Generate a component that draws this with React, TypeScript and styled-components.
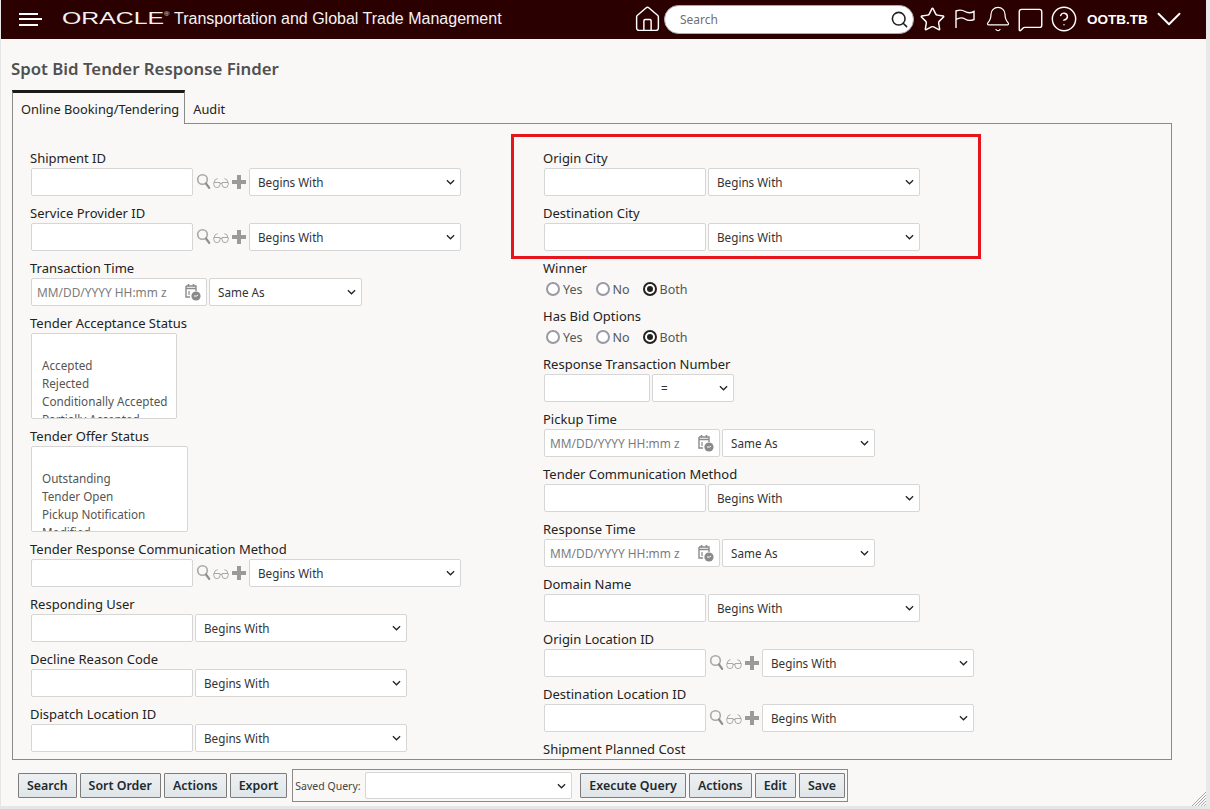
import React from "react";
import styled, { createGlobalStyle } from "styled-components";
import { Bell, ChevronDown, CircleHelp, House, MessageSquare, Search, Star } from "lucide-react";

const GlobalStyle = createGlobalStyle`
  html, body {
    margin: 0;
    padding: 0;
    background: #f9f8f6;
    font-family: "Noto Sans", "Open Sans", sans-serif;
    font-size: 12px;
    color: #333;
  }
  * { box-sizing: border-box; }
`;

const chevron =
  "data:image/svg+xml;utf8,<svg xmlns='http://www.w3.org/2000/svg' width='9' height='6' viewBox='0 0 10 6'><path d='M1 1 L5 5 L9 1' fill='none' stroke='%23222' stroke-width='1.4'/></svg>";

const Page = styled.div`
  height: 100vh;
  display: flex;
  flex-direction: column;
  overflow: hidden;
  position: relative;
  border-bottom: 3px solid #e6e6e6;
  border-left: 1px solid #e6e6e6;
  border-right: 4px solid #e9e9e9;
`;

// header
const Header = styled.header`
  height: 39px;
  flex: none;
  background: #2b0000;
  color: #fff;
  display: flex;
  align-items: center;
  padding: 0 17px 1px 18px;
`;

const Burger = styled.div`
  width: 23px;
  height: 13px;
  display: flex;
  flex-direction: column;
  justify-content: space-between;
  margin-right: 20px;
  span {
    display: block;
    height: 2px;
    background: #fff;
  }
  span:nth-child(2) { width: 23px; }
  span:nth-child(1), span:nth-child(3) { width: 19px; }
`;

const LogoSlot = styled.div`
  width: 112px;
  flex: none;
  display: flex;
`;

const Logo = styled.span`
  display: inline-block;
  font-family: "Liberation Sans", Arial, sans-serif;
  font-size: 17px;
  transform: scaleX(1.46);
  transform-origin: left center;
  color: #f2f2f2;
  sup {
    font-size: 5px;
    vertical-align: 8px;
  }
`;

const AppName = styled.div`
  font-family: "Liberation Sans", Arial, sans-serif;
  font-size: 16px;
  flex: 1;
  color: #f4f4f4;
`;

const HeaderTools = styled.div`
  display: flex;
  align-items: center;
`;

const HeaderIcon = styled.span<{ $w: number }>`
  width: ${(p) => p.$w}px;
  display: flex;
  justify-content: center;
  align-items: center;
  svg { flex: none; }
`;

const SearchBox = styled.div`
  width: 250px;
  height: 29px;
  margin: 0 2px 0 4px;
  background: #fff;
  border: 1px solid #aaa;
  border-radius: 15px;
  display: flex;
  align-items: center;
  justify-content: space-between;
  padding: 0 4px 0 15px;
  color: #6f6f6f;
  font-size: 12px;
`;

const UserName = styled.span`
  font-family: "Liberation Sans", Arial, sans-serif;
  font-weight: 700;
  font-size: 13.5px;
  width: 62px;
  margin-left: 6px;
`;

// title + tabs
const Title = styled.h1`
  margin: 20px 0 0 10px;
  height: 20px;
  line-height: 20px;
  font-size: 16.8px;
  font-weight: 600;
  color: #505050;
`;

const Tabs = styled.div`
  display: flex;
  margin: 11px 34px 0 11px;
  height: 34px;
  flex: none;
  position: relative;
  z-index: 1;
`;

const Tab = styled.div<{ $active?: boolean }>`
  font-size: 12.8px;
  color: #222;
  background: #f9f8f6;
  ${(p) =>
    p.$active
      ? `
    height: 34px;
    line-height: 33px;
    padding: 0 5px 0 8px;
    border-top: 3px solid #1a1a1a;
    border-left: 1px solid #8a8a8a;
    border-right: 1px solid #8a8a8a;
  `
      : `
    height: 33px;
    line-height: 39px;
    padding: 0 8px;
    background: transparent;
  `}
`;

const Panel = styled.div`
  flex: 1;
  min-height: 0;
  margin: -1px 34px 0 11px;
  border: 1px solid #8a8a8a;
  overflow: hidden;
  position: relative;
  display: grid;
  grid-template-columns: 513px 1fr;
  padding: 26px 0 0 17px;
`;

const Column = styled.div`
  display: flex;
  flex-direction: column;
`;

const Field = styled.div`
  flex: none;
  margin-bottom: 9px;
`;

const Label = styled.div`
  height: 18px;
  line-height: 16px;
  font-size: 13px;
  color: #222;
  white-space: nowrap;
`;

const Row = styled.div`
  display: flex;
  align-items: center;
  gap: 2px;
  height: 28px;
  padding-left: 1px;
`;

const TextInput = styled.input<{ $w?: number }>`
  width: ${(p) => p.$w ?? 162}px;
  height: 28px;
  background: #fff;
  border: 1px solid #d6d6d6;
  border-radius: 2px;
  padding: 0 5px;
  font: inherit;
`;

const DateBox = styled.div`
  width: 176px;
  height: 28px;
  background: #fff;
  border: 1px solid #d6d6d6;
  border-radius: 2px;
  padding: 0 4px 0 5px;
  display: flex;
  align-items: center;
  justify-content: space-between;
  color: #7b7b7b;
  font-size: 11.9px;
  white-space: nowrap;
`;

const DropDown = styled.select<{ $w?: number }>`
  width: ${(p) => p.$w ?? 212}px;
  height: 28px;
  appearance: none;
  background: #fff url("${chevron}") no-repeat right 5px center;
  border: 1px solid #d6d6d6;
  border-radius: 2px;
  padding: 0 8px;
  font-family: inherit;
  font-size: 11.7px;
  color: #333;
`;

const IconGroup = styled.div`
  width: 52px;
  display: flex;
  align-items: center;
  padding-left: 1px;
  gap: 1px;
`;

const PlusSlot = styled.span`
  display: flex;
  margin-left: 2px;
`;

const ListBox = styled.ul<{ $w: number }>`
  list-style: none;
  margin: 0 0 0 1px;
  width: ${(p) => p.$w}px;
  height: 86px;
  overflow: hidden;
  background: #fff;
  border: 1px solid #d6d6d6;
  border-radius: 2px;
  padding: 4px 0 0 10px;
  li {
    height: 18px;
    line-height: 18px;
    font-size: 11.7px;
    color: #555;
    white-space: nowrap;
  }
`;

const RadioRow = styled.div`
  height: 21px;
  padding: 1px 0 0 3px;
  display: flex;
  align-items: center;
  font-size: 12.5px;
  color: #555;
`;

const RadioItem = styled.label`
  display: flex;
  align-items: center;
  gap: 3px;
  margin-right: 13px;
`;

const RadioMark = styled.span<{ $on?: boolean }>`
  width: 14px;
  height: 14px;
  border-radius: 50%;
  background: #fff;
  border: ${(p) => (p.$on ? "2px solid #222" : "2px solid #9a9aa6")};
  display: flex;
  align-items: center;
  justify-content: center;
  &::after {
    content: "";
    display: ${(p) => (p.$on ? "block" : "none")};
    width: 6px;
    height: 6px;
    border-radius: 50%;
    background: #222;
  }
`;

// footer bar
const Footer = styled.div`
  flex: none;
  height: 46px;
  padding: 13px 0 0 17px;
  display: flex;
  align-items: flex-start;
  gap: 3px;
`;

const Button = styled.button`
  height: 25px;
  padding: 0 8px 1px;
  background: linear-gradient(#eef1f3, #dfe5e8);
  border: 1px solid #7c7c7c;
  border-radius: 1px;
  font-family: inherit;
  font-size: 12.4px;
  font-weight: 600;
  color: #22292e;
`;

const QueryGroup = styled.div`
  height: 33px;
  margin: -4px 0 0 2px;
  border: 1px solid #8a8a8a;
  display: flex;
  align-items: center;
  padding: 0 2px;
  gap: 3px;
`;

const QueryLabel = styled.span`
  font-size: 10.5px;
  color: #444;
  width: 67px;
  white-space: nowrap;
`;

const QuerySelect = styled(DropDown)`
  width: 207px;
  height: 27px;
  margin-right: 5px;
`;

// red highlight drawn over the form
const Highlight = styled.div`
  position: absolute;
  left: 498px;
  top: 10px;
  width: 470px;
  height: 125px;
  border: 3px solid #e8141c;
  pointer-events: none;
`;

const ResizeGrip = styled.svg`
  position: absolute;
  right: 0;
  bottom: 0;
`;

const Lens = () => (
  <svg width="16" height="20" viewBox="0 0 16 20" fill="none">
    <circle cx="6.5" cy="7.5" r="4.8" stroke="#a8a8a8" strokeWidth="1.6" />
    <path d="M10 11.5 L13.2 15.8" stroke="#8f8f8f" strokeWidth="2.2" strokeLinecap="round" />
  </svg>
);

const Glasses = () => (
  <svg width="16" height="20" viewBox="0 0 16 20" fill="none" stroke="#a8a8a8" strokeWidth="1">
    <path d="M0.8 10.5 H7 V12.5 A3 3 0 0 1 0.8 12.5 Z" />
    <path d="M9 10.5 H15.2 V12.5 A3 3 0 0 1 9 12.5 Z" />
    <path d="M7 11.5 H9 M1.2 10.5 Q1.4 7 4.6 6.6 M14.8 10.5 Q14.6 7 11.4 6.6" />
  </svg>
);

const PlusMark = () => (
  <svg width="14" height="14" viewBox="0 0 14 14">
    <path d="M5 0 H9 V5 H14 V9 H9 V14 H5 V9 H0 V5 H5 Z" fill="#9a9a9a" />
  </svg>
);

const CalendarClock = () => (
  <svg width="18" height="20" viewBox="0 0 18 20" fill="none">
    <path d="M2 4 H12 V9 M2 4 V15 H6" stroke="#8a8a8a" strokeWidth="1.4" />
    <path d="M2 6.5 H12 M4.5 2 V4.5 M9.5 2 V4.5" stroke="#8a8a8a" strokeWidth="1.6" />
    <path d="M5 9 V13" stroke="#8a8a8a" strokeWidth="1.2" />
    <circle cx="12" cy="14" r="4.6" fill="#8a8a8a" />
    <path d="M10 14 H12.5 L14 13" stroke="#fff" strokeWidth="1" />
  </svg>
);

const FlagIcon = () => (
  <svg width="22" height="22" viewBox="0 0 22 22" fill="none" stroke="#fff" strokeWidth="1.4">
    <path d="M2 20 V3 Q7 1 11 3.5 T20 3.5 V11.5 Q15 13.5 11 11 T2 11.5" />
  </svg>
);

const ops = ["Begins With", "Same As", "="];

function Pick({ value, w }: { value: string; w?: number }) {
  return (
    <DropDown $w={w} defaultValue={value}>
      {ops.map((o) => (
        <option key={o}>{o}</option>
      ))}
    </DropDown>
  );
}

function LookupField({ label }: { label: string }) {
  return (
    <Field>
      <Label>{label}</Label>
      <Row>
        <TextInput />
        <IconGroup>
          <Lens />
          <Glasses />
          <PlusSlot>
            <PlusMark />
          </PlusSlot>
        </IconGroup>
        <Pick value="Begins With" />
      </Row>
    </Field>
  );
}

function TextField({ label }: { label: string }) {
  return (
    <Field>
      <Label>{label}</Label>
      <Row>
        <TextInput />
        <Pick value="Begins With" />
      </Row>
    </Field>
  );
}

function DateField({ label }: { label: string }) {
  return (
    <Field>
      <Label>{label}</Label>
      <Row>
        <DateBox>
          MM/DD/YYYY HH:mm z
          <CalendarClock />
        </DateBox>
        <Pick value="Same As" w={153} />
      </Row>
    </Field>
  );
}

function ListField({ label, w, items }: { label: string; w: number; items: string[] }) {
  return (
    <Field>
      <Label>{label}</Label>
      <ListBox $w={w}>
        <li />
        {items.map((i) => (
          <li key={i}>{i}</li>
        ))}
      </ListBox>
    </Field>
  );
}

function RadioField({ label }: { label: string }) {
  return (
    <Field>
      <Label>{label}</Label>
      <RadioRow>
        <RadioItem>
          <RadioMark />
          Yes
        </RadioItem>
        <RadioItem>
          <RadioMark />
          No
        </RadioItem>
        <RadioItem>
          <RadioMark $on />
          Both
        </RadioItem>
      </RadioRow>
    </Field>
  );
}

export default function App() {
  return (
    <>
      <GlobalStyle />
      <Page>
        <Header>
          <Burger>
            <span />
            <span />
            <span />
          </Burger>
          <LogoSlot>
            <Logo>
              ORACLE<sup>®</sup>
            </Logo>
          </LogoSlot>
          <AppName>Transportation and Global Trade Management</AppName>
          <HeaderTools>
            <HeaderIcon $w={26}>
              <House size={29} strokeWidth={1.2} />
            </HeaderIcon>
            <SearchBox>
              Search
              <Search size={19} color="#222" strokeWidth={2} />
            </SearchBox>
            <HeaderIcon $w={32}>
              <Star size={27} strokeWidth={1.3} />
            </HeaderIcon>
            <HeaderIcon $w={33}>
              <FlagIcon />
            </HeaderIcon>
            <HeaderIcon $w={33}>
              <Bell size={28} strokeWidth={1.05} />
            </HeaderIcon>
            <HeaderIcon $w={33}>
              <MessageSquare size={27} strokeWidth={1.25} />
            </HeaderIcon>
            <HeaderIcon $w={34}>
              <CircleHelp size={28} strokeWidth={1.25} />
            </HeaderIcon>
            <UserName>OOTB.TB</UserName>
            <HeaderIcon $w={40}>
              <ChevronDown size={42} strokeWidth={1.1} />
            </HeaderIcon>
          </HeaderTools>
        </Header>

        <Title>Spot Bid Tender Response Finder</Title>
        <Tabs>
          <Tab $active>Online Booking/Tendering</Tab>
          <Tab>Audit</Tab>
        </Tabs>

        <Panel>
          <Column>
            <LookupField label="Shipment ID" />
            <LookupField label="Service Provider ID" />
            <DateField label="Transaction Time" />
            <ListField
              label="Tender Acceptance Status"
              w={146}
              items={["Accepted", "Rejected", "Conditionally Accepted", "Partially Accepted"]}
            />
            <ListField
              label="Tender Offer Status"
              w={157}
              items={["Outstanding", "Tender Open", "Pickup Notification", "Modified"]}
            />
            <LookupField label="Tender Response Communication Method" />
            <TextField label="Responding User" />
            <TextField label="Decline Reason Code" />
            <TextField label="Dispatch Location ID" />
          </Column>
          <Column>
            <TextField label="Origin City" />
            <TextField label="Destination City" />
            <RadioField label="Winner" />
            <RadioField label="Has Bid Options" />
            <Field>
              <Label>Response Transaction Number</Label>
              <Row>
                <TextInput $w={106} />
                <Pick value="=" w={82} />
              </Row>
            </Field>
            <DateField label="Pickup Time" />
            <TextField label="Tender Communication Method" />
            <DateField label="Response Time" />
            <TextField label="Domain Name" />
            <LookupField label="Origin Location ID" />
            <LookupField label="Destination Location ID" />
            <TextField label="Shipment Planned Cost" />
          </Column>
          <Highlight />
        </Panel>

        <Footer>
          <Button>Search</Button>
          <Button>Sort Order</Button>
          <Button>Actions</Button>
          <Button>Export</Button>
          <QueryGroup>
            <QueryLabel>Saved Query:</QueryLabel>
            <QuerySelect />
            <Button>Execute Query</Button>
            <Button>Actions</Button>
            <Button>Edit</Button>
            <Button>Save</Button>
          </QueryGroup>
        </Footer>

        <ResizeGrip width="14" height="14" viewBox="0 0 14 14" stroke="#a9a9a9" strokeWidth="1">
          <path d="M0 14 L14 0 M3 14 L14 3 M6 14 L14 6 M9 14 L14 9 M12 14 L14 12" />
        </ResizeGrip>
      </Page>
    </>
  );
}
